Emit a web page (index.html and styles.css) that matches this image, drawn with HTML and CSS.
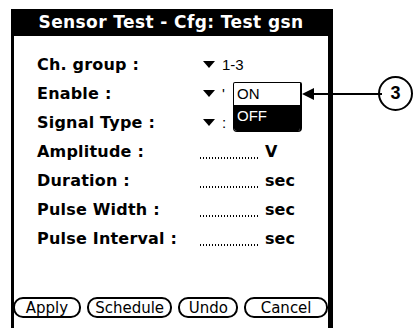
FILE: index.html
```html
<!DOCTYPE html>
<html lang="en">

<head>
    <title>Sensor Test</title>
    <link rel="stylesheet" href="styles.css">
</head>

<body>
    <div class="screen">
        <div class="titlebar">Sensor Test - Cfg: Test gsn</div>
        <div class="form">
            <div class="row">
                <span class="label">Ch. group :</span>
                <span class="pick"><svg class="tri" width="12" height="7" viewBox="0 0 12 7"><path d="M0 0h12L6 7z"/></svg>1-3</span>
            </div>
            <div class="row">
                <span class="label">Enable :</span>
                <span class="pick"><svg class="tri" width="12" height="7" viewBox="0 0 12 7"><path d="M0 0h12L6 7z"/></svg>'</span>
            </div>
            <div class="row">
                <span class="label">Signal Type :</span>
                <span class="pick"><svg class="tri" width="12" height="7" viewBox="0 0 12 7"><path d="M0 0h12L6 7z"/></svg>:</span>
            </div>
            <div class="row">
                <span class="label">Amplitude :</span>
                <span class="field"><span class="dots"></span><b>V</b></span>
            </div>
            <div class="row">
                <span class="label">Duration :</span>
                <span class="field"><span class="dots"></span><b>sec</b></span>
            </div>
            <div class="row">
                <span class="label">Pulse Width :</span>
                <span class="field"><span class="dots"></span><b>sec</b></span>
            </div>
            <div class="row">
                <span class="label">Pulse Interval :</span>
                <span class="field"><span class="dots"></span><b>sec</b></span>
            </div>
        </div>
        <div class="buttons">
            <button class="btn apply">Apply</button>
            <button class="btn schedule">Schedule</button>
            <button class="btn undo">Undo</button>
            <button class="btn cancel">Cancel</button>
        </div>

        <!-- open popup list for Enable -->
        <div class="popup">
            <div class="opt">ON</div>
            <div class="opt sel">OFF</div>
        </div>
    </div>

    <!-- callout -->
    <div class="callout">
        <svg class="arrow" width="80" height="14" viewBox="0 0 80 14"><path d="M0 7L12 1v12z"/><rect x="10" y="6" width="70" height="2"/></svg>
        <div class="num">3</div>
    </div>
</body>

</html>
```

FILE: styles.css
```css
body {
    margin: 0;
    width: 416px;
    height: 328px;
    background-color: white;
    font-family: "Liberation Sans", Arial, sans-serif;
    color: black;
    position: relative;
    overflow: hidden;
}

.screen {
    position: relative;
    margin-left: 11px;
    margin-top: 9px;
    width: 322px;
    height: 319px;
    box-sizing: border-box;
    border-left: 3px solid black;
    border-right: 5px solid black;
    display: flex;
    flex-direction: column;
}

.titlebar {
    background-color: black;
    color: white;
    height: 27px;
    margin-left: -1px;
    margin-right: -1px;
    font-family: "DejaVu Sans", sans-serif;
    font-weight: bold;
    font-size: 17px;
    line-height: 27px;
    text-align: center;
    letter-spacing: 0.4px;
}

.form {
    padding: 14px 0 0 23px;
}

.row {
    display: flex;
    align-items: center;
    height: 29px;
}

.label {
    width: 166px;
    font-family: "DejaVu Sans", sans-serif;
    font-weight: bold;
    font-size: 16px;
    letter-spacing: 0.2px;
}

.pick {
    display: flex;
    align-items: center;
    font-size: 15px;
}

.tri {
    margin-right: 7px;
}

.field {
    display: flex;
    align-items: flex-end;
    height: 20px;
}

.dots {
    width: 60px;
    height: 2px;
    margin-bottom: 3px;
    margin-right: 5px;
    margin-left: -3px;
    background-image: repeating-linear-gradient(to right, black 0 1px, transparent 1px 3px);
}

.field b {
    font-family: "DejaVu Sans", sans-serif;
    font-size: 16px;
    line-height: 20px;
}

.buttons {
    margin-top: auto;
    margin-bottom: 10px;
    margin-left: -1px;
    display: flex;
    gap: 6px;
}

.btn {
    font-family: "DejaVu Sans", sans-serif;
    font-size: 15px;
    height: 21px;
    padding: 0;
    background: white;
    border: 2px solid black;
    border-radius: 10px;
    color: black;
}

.apply { width: 68px; }
.schedule { width: 86px; }
.undo { width: 60px; }
.cancel { width: 84px; }

.popup {
    position: absolute;
    left: 219px;
    top: 73px;
    width: 66px;
    border: 1px solid black;
    border-right-width: 2px;
    border-radius: 2px 2px 4px 4px;
    background: white;
    font-size: 15px;
    overflow: hidden;
}

.opt {
    height: 22px;
    line-height: 22px;
    padding-left: 3px;
}

.opt.sel {
    background: black;
    color: white;
    height: 26px;
}

.callout {
    position: absolute;
    left: 302px;
    top: 76px;
    display: flex;
    align-items: center;
}

.arrow {
    display: block;
}

.num {
    width: 31px;
    height: 31px;
    border: 2px solid black;
    border-radius: 50%;
    font-weight: bold;
    font-size: 18px;
    line-height: 31px;
    text-align: center;
    margin-left: -4px;
}
```
